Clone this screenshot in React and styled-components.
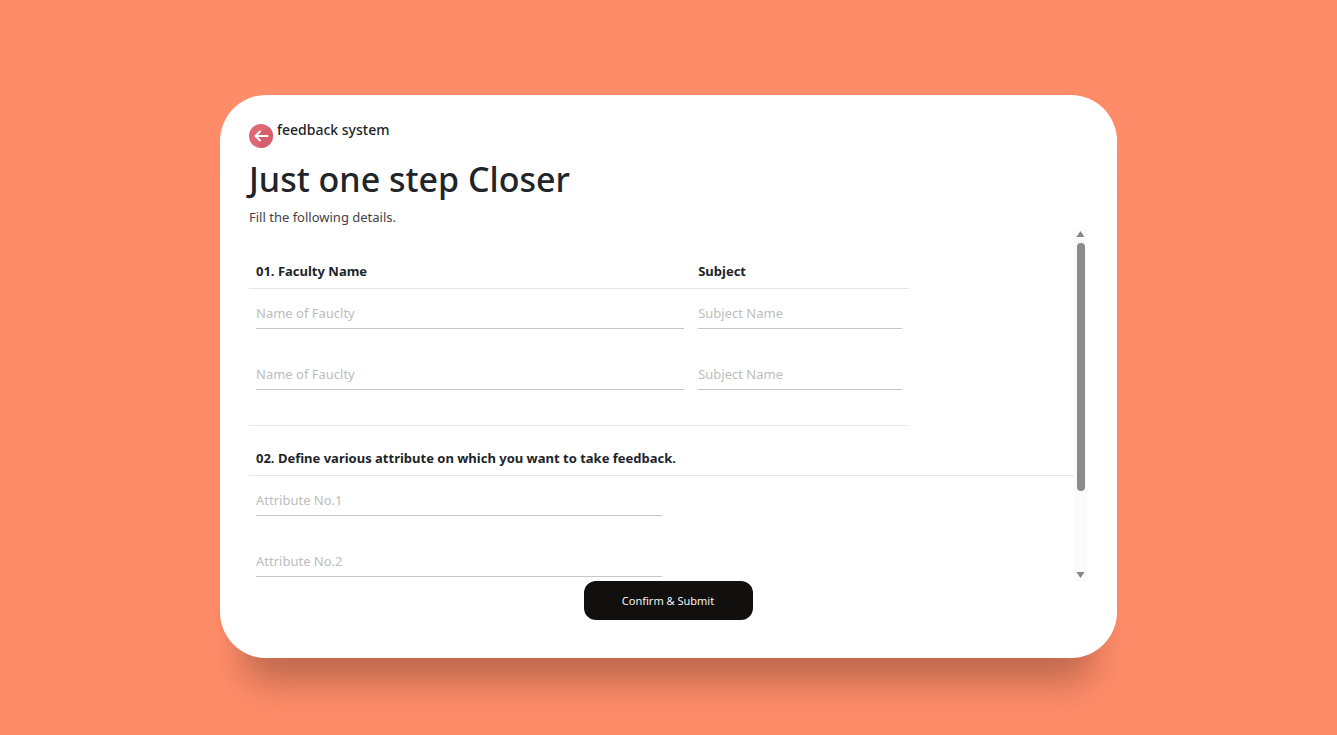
import React from "react";
import styled, { createGlobalStyle } from "styled-components";

const GlobalStyle = createGlobalStyle`
  *, *::before, *::after { box-sizing: border-box; }
  body {
    margin: 0;
    background: #ff8c69;
    color: #212529;
    font-family: "Segoe UI", "Noto Sans", "Open Sans", sans-serif;
    font-size: 14px;
    line-height: 21px;
  }
`;

const Page = styled.main`
  min-height: 100vh;
  padding: 95px 220px 77px;
`;

const Card = styled.section`
  min-width: 600px;
  padding: 26px 30px 38px 29px;
  border-radius: 46px;
  background: #fff;
  box-shadow: 0 48px 36px -24px rgba(0, 0, 0, 0.26);
`;

const Brand = styled.header`
  display: flex;
  gap: 4px;
  height: 27px;
`;

const BackLink = styled.a`
  align-self: flex-end;
  width: 24px;
  height: 24px;

  svg { display: block; }
`;

const BrandName = styled.span`
  font-size: 14px;
  font-weight: 500;
  line-height: 18px;
`;

const Title = styled.h1`
  margin: 9px 0 5px;
  font-size: 34px;
  font-weight: 500;
  line-height: 44px;
`;

const Lead = styled.p`
  margin: 0;
  font-size: 13px;
  line-height: 23px;
  color: #3f4347;
`;

const Form = styled.form`
  display: flex;
  flex-direction: column;
  align-items: center;
`;

const ScrollPanel = styled.div`
  display: flex;
  align-self: stretch;
  height: 352px;
`;

const Fields = styled.div`
  flex: 1;
  padding-top: 24px;
  overflow-y: auto;
  scrollbar-width: none;
`;

const Table = styled.table`
  width: ${(p) => p.$width};
  margin-bottom: 14px;
  padding-bottom: 14px;
  border-spacing: 0;
  border-bottom: 1px solid #e6e8ea;
  table-layout: fixed;
`;

const HeadCell = styled.th`
  width: ${(p) => p.$width};
  padding: 8px 7px 6px;
  border-bottom: 1px solid #e3e5e8;
  font-size: 13px;
  font-weight: 700;
  text-align: left;
`;

const Cell = styled.td`
  padding: 7px 7px 21px;
`;

const Input = styled.input`
  display: block;
  width: ${(p) => p.$width || "100%"};
  height: 33px;
  padding: 2px 0 0;
  border: 0;
  border-bottom: 1px solid #c6c6c6;
  border-radius: 0;
  background: transparent;
  color: inherit;
  font: inherit;
  font-size: 13px;
  outline: none;

  &::placeholder { color: #bdbdbd; opacity: 1; }
`;

const Scrollbar = styled.div`
  display: flex;
  flex-direction: column;
  align-items: center;
  width: 13px;
  padding: 1px 0 2px;
  background: #fbfbfb;
`;

const Thumb = styled.div`
  width: 8px;
  height: 71%;
  margin: 5px 0 auto;
  border-radius: 4px;
  background: #8b8b8b;
`;

const Submit = styled.button`
  width: 169px;
  height: 39px;
  padding: 0;
  border: 0;
  border-radius: 12px;
  background: #120f0f;
  color: #f4f4f4;
  font: inherit;
  font-size: 11px;
`;

const BackIcon = () => (
  <svg width="24" height="24" viewBox="0 0 24 24" aria-hidden="true">
    <circle cx="12" cy="12" r="12" fill="#dc6872" />
    <path d="M20.5 3.5A12 12 0 0 1 12 24L5.5 12z" fill="#cb5866" opacity="0.5" />
    <path
      d="M18.500 12H6.500M11 7.500L6.500 12l4.500 4.500"
      fill="none"
      stroke="#fff"
      strokeWidth="2"
      strokeLinecap="round"
      strokeLinejoin="round"
    />
  </svg>
);

const Arrow = ({ down }) => (
  <svg width="9" height="8" viewBox="0 0 9 8" aria-hidden="true">
    <path d={down ? "M.5 1h8L4.500 7z" : "M.5 7h8L4.500 1z"} fill="#858585" />
  </svg>
);

const facultyRows = [1, 2];
const attributeRows = [1, 2];

export default function App() {
  return (
    <>
      <GlobalStyle />
      <Page>
        <Card>
          <Brand>
            <BackLink href="#" aria-label="Back">
              <BackIcon />
            </BackLink>
            <BrandName>feedback system</BrandName>
          </Brand>
          <Title>Just one step Closer</Title>
          <Lead>Fill the following details.</Lead>
          <Form onSubmit={(e) => e.preventDefault()}>
            <ScrollPanel>
              <Fields>
                <Table $width="80%">
                  <thead>
                    <tr>
                      <HeadCell $width="67%" scope="col">01. Faculty Name</HeadCell>
                      <HeadCell $width="33%" scope="col">Subject</HeadCell>
                    </tr>
                  </thead>
                  <tbody>
                    {facultyRows.map((n) => (
                      <tr key={n}>
                        <Cell>
                          <Input type="text" aria-label={`Faculty name ${n}`} placeholder="Name of Fauclty" />
                        </Cell>
                        <Cell>
                          <Input type="text" aria-label={`Subject ${n}`} placeholder="Subject Name" />
                        </Cell>
                      </tr>
                    ))}
                  </tbody>
                </Table>
                <Table $width="100%">
                  <thead>
                    <tr>
                      <HeadCell scope="col">
                        02. Define various attribute on which you want to take feedback.
                      </HeadCell>
                    </tr>
                  </thead>
                  <tbody>
                    {attributeRows.map((n) => (
                      <tr key={n}>
                        <Cell>
                          <Input
                            $width="50%"
                            type="text"
                            aria-label={`Attribute ${n}`}
                            placeholder={`Attribute No.${n}`}
                          />
                        </Cell>
                      </tr>
                    ))}
                  </tbody>
                </Table>
              </Fields>
              <Scrollbar aria-hidden="true">
                <Arrow />
                <Thumb />
                <Arrow down />
              </Scrollbar>
            </ScrollPanel>
            <Submit type="submit">Confirm &amp; Submit</Submit>
          </Form>
        </Card>
      </Page>
    </>
  );
}
